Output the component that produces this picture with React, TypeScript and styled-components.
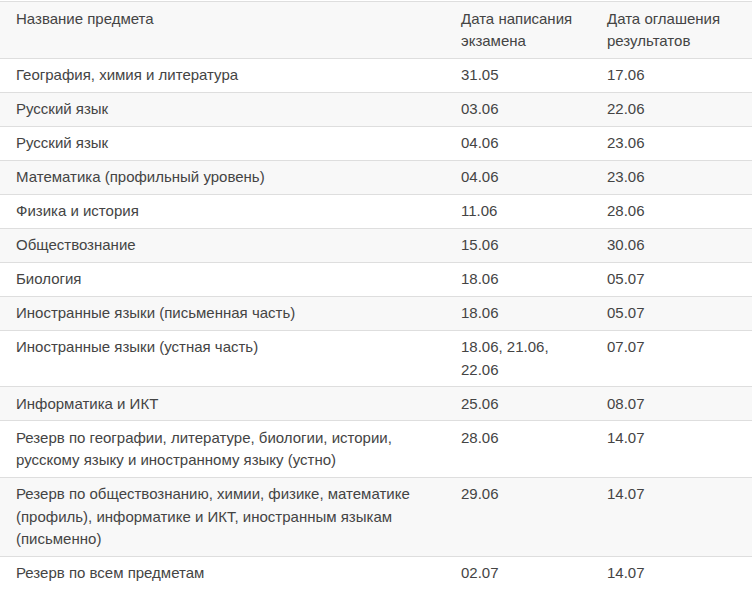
import { createGlobalStyle } from 'styled-components';
import styled from 'styled-components';

type ExamRow = {
    subject: string;
    examDate: string;
    resultDate: string;
};

const rows: ExamRow[] = [
    { subject: 'География, химия и литература', examDate: '31.05', resultDate: '17.06' },
    { subject: 'Русский язык', examDate: '03.06', resultDate: '22.06' },
    { subject: 'Русский язык', examDate: '04.06', resultDate: '23.06' },
    { subject: 'Математика (профильный уровень)', examDate: '04.06', resultDate: '23.06' },
    { subject: 'Физика и история', examDate: '11.06', resultDate: '28.06' },
    { subject: 'Обществознание', examDate: '15.06', resultDate: '30.06' },
    { subject: 'Биология', examDate: '18.06', resultDate: '05.07' },
    { subject: 'Иностранные языки (письменная часть)', examDate: '18.06', resultDate: '05.07' },
    { subject: 'Иностранные языки (устная часть)', examDate: '18.06, 21.06, 22.06', resultDate: '07.07' },
    { subject: 'Информатика и ИКТ', examDate: '25.06', resultDate: '08.07' },
    {
        subject:
            'Резерв по географии, литературе, биологии, истории, русскому языку и иностранному языку (устно)',
        examDate: '28.06',
        resultDate: '14.07',
    },
    {
        subject:
            'Резерв по обществознанию, химии, физике, математике (профиль), информатике и ИКТ, иностранным языкам (письменно)',
        examDate: '29.06',
        resultDate: '14.07',
    },
    { subject: 'Резерв по всем предметам', examDate: '02.07', resultDate: '14.07' },
];

const GlobalStyle = createGlobalStyle`
    body {
        margin: 0;
        background: #ffffff;
        font-family: 'Liberation Sans', Arial, sans-serif;
    }
`;

const Page = styled.div`
    padding-top: 1px;
`;

const Table = styled.table`
    width: 752px;
    border-collapse: collapse;
    table-layout: fixed;
    color: #444444;
    font-size: 15px;
    line-height: 22.5px;
`;

const Col = styled.col<{ $width: number }>`
    width: ${({ $width }) => $width}px;
`;

const Row = styled.tr`
    border-top: 1px solid #dedede;

    tbody &:nth-child(even) {
        background: #f8f8f8;
    }
`;

const HeadRow = styled(Row)`
    background: #f8f8f8;
`;

const HeadCell = styled.th`
    padding: 5.5px 16px 5px;
    text-align: left;
    vertical-align: top;
    font-weight: normal;
`;

const Cell = styled.td`
    padding: 5.5px 16px 5px;
    vertical-align: top;
`;

export default function App() {
    return (
        <Page>
            <GlobalStyle />
            <Table>
                <colgroup>
                    <Col $width={445} />
                    <Col $width={146} />
                    <Col $width={161} />
                </colgroup>
                <thead>
                    <HeadRow>
                        <HeadCell>Название предмета</HeadCell>
                        <HeadCell>Дата написания экзамена</HeadCell>
                        <HeadCell>Дата оглашения результатов</HeadCell>
                    </HeadRow>
                </thead>
                <tbody>
                    {rows.map((row, i) => (
                        <Row key={i}>
                            <Cell>{row.subject}</Cell>
                            <Cell>{row.examDate}</Cell>
                            <Cell>{row.resultDate}</Cell>
                        </Row>
                    ))}
                </tbody>
            </Table>
        </Page>
    );
}
